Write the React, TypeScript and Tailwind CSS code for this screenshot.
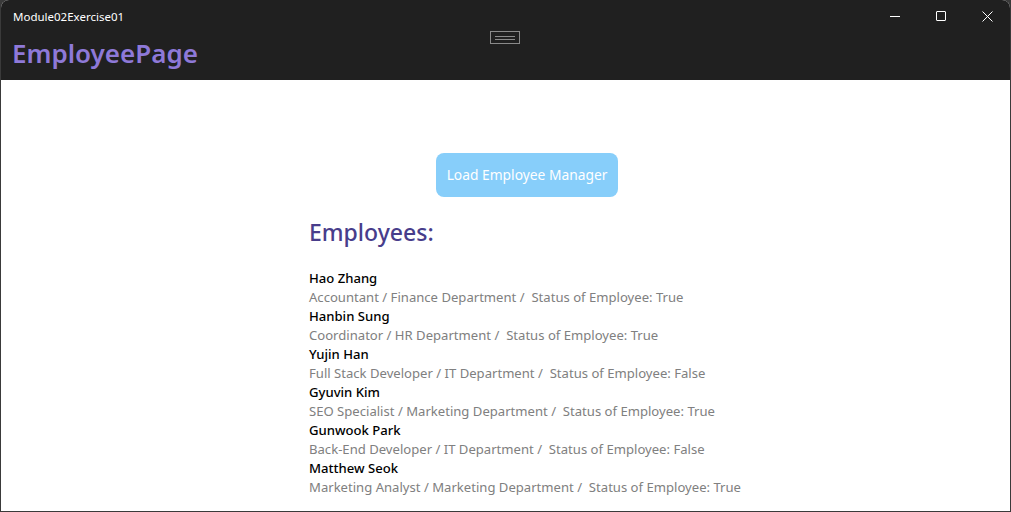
const employees = [
  { name: "Hao Zhang", role: "Accountant", dept: "Finance Department", active: true },
  { name: "Hanbin Sung", role: "Coordinator", dept: "HR Department", active: true },
  { name: "Yujin Han", role: "Full Stack Developer", dept: "IT Department", active: false },
  { name: "Gyuvin Kim", role: "SEO Specialist", dept: "Marketing Department", active: true },
  { name: "Gunwook Park", role: "Back-End Developer", dept: "IT Department", active: false },
  { name: "Matthew Seok", role: "Marketing Analyst", dept: "Marketing Department", active: true },
];

const font = { fontFamily: '"Noto Sans", "Open Sans", sans-serif' };

export default function App() {
  return (
    <div className="w-[1011px] h-[512px] bg-[#3a3a3a] overflow-hidden" style={font}>
      <div className="h-[511px] mx-px bg-white rounded-t-lg overflow-hidden flex flex-col">
        {/* Title bar */}
        <div className="h-[80px] bg-[#202020] relative shrink-0">
          <div className="absolute left-[12px] top-[8px] text-[11.5px] text-white">Module02Exercise01</div>
          <div className="absolute left-[489px] top-[31px] w-[30px] h-[13px] border border-[#8a8a8a] flex flex-col items-center justify-center gap-[2px]">
            <div className="w-[20px] h-px bg-[#8a8a8a]" />
            <div className="w-[20px] h-px bg-[#8a8a8a]" />
          </div>
          <div className="absolute right-0 top-0 flex h-[32px] text-white">
            <div className="w-[46px] flex items-center justify-center">
              <div className="w-[10px] h-px bg-white" />
            </div>
            <div className="w-[46px] flex items-center justify-center">
              <div className="w-[10px] h-[10px] border border-white rounded-[1px]" />
            </div>
            <div className="w-[46px] flex items-center justify-center">
              <svg width="11" height="11" viewBox="0 0 11 11">
                <path d="M0.5 0.5 L10.5 10.5 M10.5 0.5 L0.5 10.5" stroke="white" strokeWidth="1" />
              </svg>
            </div>
          </div>
          <div className="absolute left-[11px] top-[36px] text-[26px] font-semibold text-[#8e79d8] leading-[34px]">
            EmployeePage
          </div>
        </div>

        {/* Content */}
        <div className="ml-[308px] w-[436px] flex flex-col pt-[73px]">
          <button className="self-center w-[182px] h-[44px] rounded-lg bg-[#87cefa] text-white text-[13.8px]">
            Load Employee Manager
          </button>
          <div className="mt-[18px] text-[23px] font-medium text-[#483d8b] leading-[34px]">Employees:</div>
          <div className="mt-[20px] flex flex-col text-[13.1px] leading-[19px]">
            {employees.map((e) => (
              <div key={e.name}>
                <div className="font-medium text-black">{e.name}</div>
                <div className="text-[#808080] whitespace-pre">
                  {`${e.role} / ${e.dept} /  Status of Employee: ${e.active ? "True" : "False"}`}
                </div>
              </div>
            ))}
          </div>
        </div>
      </div>
    </div>
  );
}
